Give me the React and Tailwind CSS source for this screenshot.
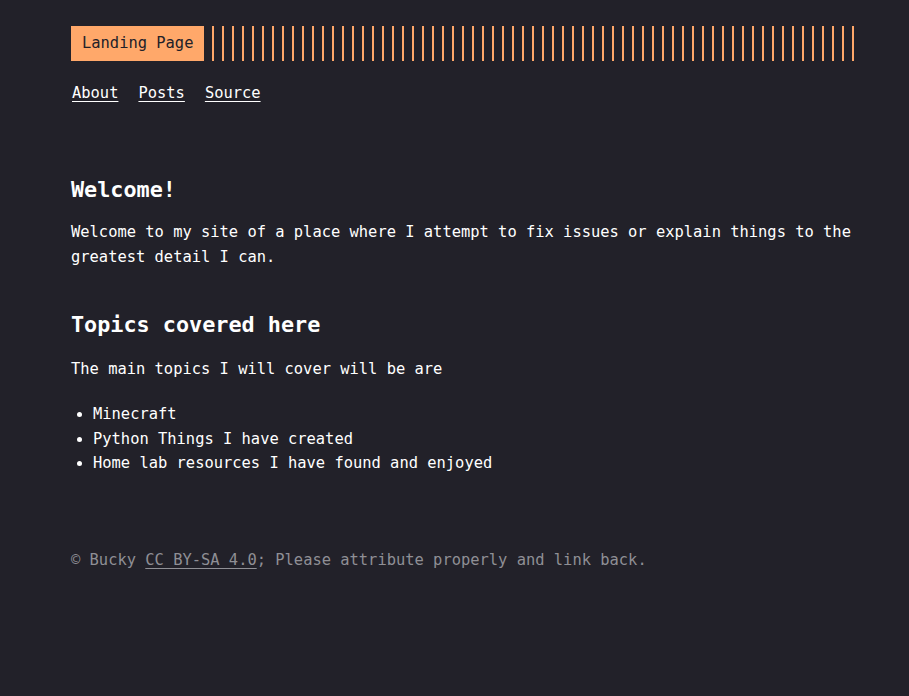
export default function App() {
  const font = { fontFamily: '"DejaVu Sans Mono", "Liberation Mono", monospace' };
  return (
    <div className="min-h-[696px] w-full bg-[#222129] text-white" style={font}>
      <div className="ml-[71px] mr-[54px] pt-[26px] text-[15.43px] leading-[25px]">
        <header>
          <div className="flex items-stretch">
            <a className="block bg-[#ffa86a] px-[11px] py-[5px] text-[#222129] no-underline">Landing Page</a>
            <div className="ml-[8px] flex-1 bg-[repeating-linear-gradient(90deg,#ffa86a_0px,#ffa86a_2px,transparent_2px,transparent_10px)]" />
          </div>
          <nav className="mt-[20px] flex gap-[20px] pl-[1px]">
            <a className="underline underline-offset-[3px]">About</a>
            <a className="underline underline-offset-[3px]">Posts</a>
            <a className="underline underline-offset-[3px]">Source</a>
          </nav>
        </header>
        <main className="mt-[70px]">
          <h1 className="text-[21.8px] font-bold leading-[28px]">Welcome!</h1>
          <p className="mt-[16px]">Welcome to my site of a place where I attempt to fix issues or explain things to the greatest detail I can.</p>
          <h2 className="mt-[41px] text-[21.8px] font-bold leading-[28px]">Topics covered here</h2>
          <p className="mt-[18px]">The main topics I will cover will be are</p>
          <ul className="mt-[20px] list-disc pl-[22px] leading-[24.5px]">
            <li>Minecraft</li>
            <li>Python Things I have created</li>
            <li>Home lab resources I have found and enjoyed</li>
          </ul>
        </main>
        <footer className="mt-[72px] text-[#8f8f95]">
          © Bucky <a className="underline underline-offset-[3px]">CC BY-SA 4.0</a>; Please attribute properly and link back.
        </footer>
      </div>
    </div>
  );
}
